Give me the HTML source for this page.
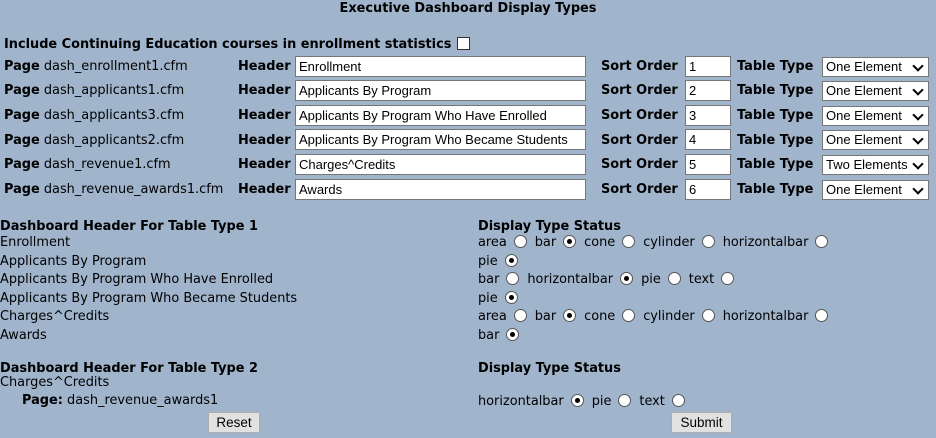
<!DOCTYPE html>
<html><head><style>
body{margin:0;width:936px;height:438px;background:#a0b4cc;font-family:"DejaVu Sans","Liberation Sans",sans-serif;font-size:12.9px;color:#000;position:relative;overflow:hidden}
.a{position:absolute;white-space:nowrap}
b{font-weight:bold}
.in{position:absolute;background:#fff;border:1px solid #767676;box-sizing:border-box;height:21px;font-family:"Liberation Sans",sans-serif;font-size:13px;padding:1px 3px;line-height:17px;white-space:nowrap;overflow:hidden}
.sel{position:absolute;background:#fff;border:1px solid #767676;box-sizing:border-box;height:20px;width:107px;left:822px;font-family:"Liberation Sans",sans-serif;font-size:13px;padding:0 3px;line-height:18px;white-space:nowrap}
.sel:after{content:"";position:absolute;right:6px;top:4px;width:6px;height:6px;border-right:2px solid #000;border-bottom:2px solid #000;transform:rotate(45deg)}
.r{display:inline-block;width:11px;height:11px;border:1px solid #555;border-radius:50%;background:#fff;vertical-align:-2px;margin:0 8px 0 7px;position:relative}
.r.c:after{content:"";position:absolute;left:3px;top:3px;width:5px;height:5px;border-radius:50%;background:#000}
.btn{position:absolute;background:#e1e1e1;border:1px solid #adadad;box-sizing:border-box;font-family:"Liberation Sans",sans-serif;font-size:13.5px;text-align:center;line-height:19px;height:21px}
</style></head><body>
<div class="a" style="left:0;width:936px;text-align:center;top:1px"><b>Executive Dashboard Display Types</b></div>
<div class="a" style="left:4px;top:37px"><b>Include Continuing Education courses in enrollment statistics</b></div>
<div style="position:absolute;left:457px;top:37px;width:11px;height:11px;border:1px solid #333;background:#fff"></div>

<div class="a" style="left:4px;top:59px"><b>Page</b> dash_enrollment1.cfm</div>
<div class="a" style="left:238px;top:59px"><b>Header</b></div>
<div class="in" style="left:295px;top:56px;width:291px">Enrollment</div>
<div class="a" style="left:601px;top:59px"><b>Sort Order</b></div>
<div class="in" style="left:685px;top:56px;width:46px">1</div>
<div class="a" style="left:737px;top:59px"><b>Table Type</b></div>
<div class="sel" style="top:57px">One Element</div>

<div class="a" style="left:4px;top:83px"><b>Page</b> dash_applicants1.cfm</div>
<div class="a" style="left:238px;top:83px"><b>Header</b></div>
<div class="in" style="left:295px;top:80px;width:291px">Applicants By Program</div>
<div class="a" style="left:601px;top:83px"><b>Sort Order</b></div>
<div class="in" style="left:685px;top:80px;width:46px">2</div>
<div class="a" style="left:737px;top:83px"><b>Table Type</b></div>
<div class="sel" style="top:81px">One Element</div>

<div class="a" style="left:4px;top:108px"><b>Page</b> dash_applicants3.cfm</div>
<div class="a" style="left:238px;top:108px"><b>Header</b></div>
<div class="in" style="left:295px;top:105px;width:291px">Applicants By Program Who Have Enrolled</div>
<div class="a" style="left:601px;top:108px"><b>Sort Order</b></div>
<div class="in" style="left:685px;top:105px;width:46px">3</div>
<div class="a" style="left:737px;top:108px"><b>Table Type</b></div>
<div class="sel" style="top:106px">One Element</div>

<div class="a" style="left:4px;top:133px"><b>Page</b> dash_applicants2.cfm</div>
<div class="a" style="left:238px;top:133px"><b>Header</b></div>
<div class="in" style="left:295px;top:129px;width:291px">Applicants By Program Who Became Students</div>
<div class="a" style="left:601px;top:133px"><b>Sort Order</b></div>
<div class="in" style="left:685px;top:129px;width:46px">4</div>
<div class="a" style="left:737px;top:133px"><b>Table Type</b></div>
<div class="sel" style="top:130px">One Element</div>

<div class="a" style="left:4px;top:157px"><b>Page</b> dash_revenue1.cfm</div>
<div class="a" style="left:238px;top:157px"><b>Header</b></div>
<div class="in" style="left:295px;top:154px;width:291px">Charges^Credits</div>
<div class="a" style="left:601px;top:157px"><b>Sort Order</b></div>
<div class="in" style="left:685px;top:154px;width:46px">5</div>
<div class="a" style="left:737px;top:157px"><b>Table Type</b></div>
<div class="sel" style="top:155px">Two Elements</div>

<div class="a" style="left:4px;top:182px"><b>Page</b> dash_revenue_awards1.cfm</div>
<div class="a" style="left:238px;top:182px"><b>Header</b></div>
<div class="in" style="left:295px;top:179px;width:291px">Awards</div>
<div class="a" style="left:601px;top:182px"><b>Sort Order</b></div>
<div class="in" style="left:685px;top:179px;width:46px">6</div>
<div class="a" style="left:737px;top:182px"><b>Table Type</b></div>
<div class="sel" style="top:180px">One Element</div>

<div class="a" style="left:0;top:219px"><b>Dashboard Header For Table Type 1</b></div>
<div class="a" style="left:0;top:235px">Enrollment</div>
<div class="a" style="left:0;top:254px">Applicants By Program</div>
<div class="a" style="left:0;top:272px">Applicants By Program Who Have Enrolled</div>
<div class="a" style="left:0;top:291px">Applicants By Program Who Became Students</div>
<div class="a" style="left:0;top:309px">Charges^Credits</div>
<div class="a" style="left:0;top:328px">Awards</div>

<div class="a" style="left:478px;top:219px"><b>Display Type Status</b></div>
<div class="a" style="left:478px;top:235px">area<span class="r"></span>bar<span class="r c"></span>cone<span class="r"></span>cylinder<span class="r"></span>horizontalbar<span class="r"></span></div>
<div class="a" style="left:478px;top:254px">pie<span class="r c"></span></div>
<div class="a" style="left:478px;top:272px">bar<span class="r"></span>horizontalbar<span class="r c"></span>pie<span class="r"></span>text<span class="r"></span></div>
<div class="a" style="left:478px;top:291px">pie<span class="r c"></span></div>
<div class="a" style="left:478px;top:309px">area<span class="r"></span>bar<span class="r c"></span>cone<span class="r"></span>cylinder<span class="r"></span>horizontalbar<span class="r"></span></div>
<div class="a" style="left:478px;top:328px">bar<span class="r c"></span></div>

<div class="a" style="left:0;top:361px"><b>Dashboard Header For Table Type 2</b></div>
<div class="a" style="left:0;top:375px">Charges^Credits</div>
<div class="a" style="left:22px;top:393px"><b>Page:</b> dash_revenue_awards1</div>
<div class="a" style="left:478px;top:361px"><b>Display Type Status</b></div>
<div class="a" style="left:478px;top:394px">horizontalbar<span class="r c"></span>pie<span class="r"></span>text<span class="r"></span></div>

<div class="btn" style="left:208px;top:412px;width:52px">Reset</div>
<div class="btn" style="left:671px;top:412px;width:61px">Submit</div>
</body></html>
